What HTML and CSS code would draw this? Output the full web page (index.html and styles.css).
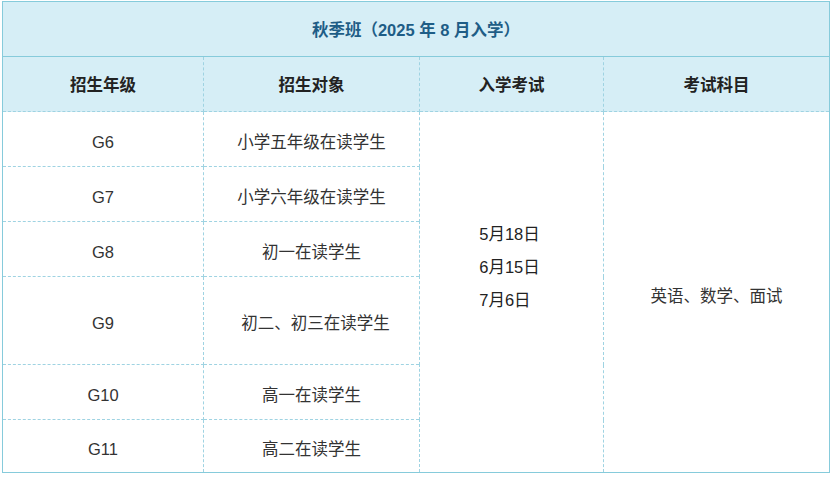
FILE: index.html
```html
<!DOCTYPE html>
<html lang="zh-CN">
<head>
<meta charset="utf-8">
<link rel="stylesheet" href="styles.css">
</head>
<body>
<div class="wrap">
<table class="plan">
  <colgroup>
    <col class="c1"><col class="c2"><col class="c3"><col class="c4">
  </colgroup>
  <thead>
    <tr class="title-row"><th colspan="4">秋季班（2025 年 8 月入学）</th></tr>
    <tr class="head-row"><th>招生年级</th><th>招生对象</th><th>入学考试</th><th>考试科目</th></tr>
  </thead>
  <tbody>
    <tr class="r"><td class="g">G6</td><td>小学五年级在读学生</td>
      <td rowspan="6" class="dates"><div class="date-list"><div>5月18日</div><div>6月15日</div><div>7月6日</div></div></td>
      <td rowspan="6" class="subj">英语、数学、面试</td></tr>
    <tr class="r"><td class="g">G7</td><td>小学六年级在读学生</td></tr>
    <tr class="r"><td class="g">G8</td><td>初一在读学生</td></tr>
    <tr class="r tall"><td class="g">G9</td><td class="shift">初二、初三在读学生</td></tr>
    <tr class="r"><td class="g">G10</td><td>高一在读学生</td></tr>
    <tr class="r last"><td class="g">G11</td><td>高二在读学生</td></tr>
  </tbody>
</table>
</div>
</body>
</html>
```
FILE: styles.css
```css
html, body {
  margin: 0;
  padding: 0;
  background: #ffffff;
}
.wrap {
  padding: 1px 0 0 2px;
}
.plan {
  border-collapse: collapse;
  width: 827px;
  table-layout: fixed;
  font-family: "Liberation Sans", "Noto Sans CJK SC", sans-serif;
  font-size: 16.5px;
  color: #333333;
  border: 1px solid #86cbdb;
}
.c1 { width: 201px; }
.c2 { width: 216px; }
.c3 { width: 184px; }
.c4 { width: 226px; }
th, td {
  text-align: center;
  vertical-align: middle;
  padding: 0;
  border: 1px dashed #9fd3e2;
}
.title-row,
.head-row,
.r {
  height: 55px;
}
.r.tall {
  height: 88px;
}
.r.last {
  height: 53px;
}
.title-row th {
  background: #d6eef6;
  color: #1e5d86;
  font-weight: bold;
  font-size: 16.5px;
  border-bottom: 1px solid #86cbdb;
}
.head-row th {
  background: #d6eef6;
  color: #222222;
  font-weight: bold;
}
.r td {
  padding-top: 3px;
}
.r td.g {
  padding-top: 6px;
}
.r td.shift {
  padding-left: 8px;
}
.r td.dates {
  padding: 0 0 50px 0;
}
.date-list {
  display: inline-flex;
  flex-direction: column;
  gap: 10px;
  text-align: left;
  color: #222222;
  margin-right: 4px;
}
.date-list div {
  line-height: 23px;
}
.r td.subj {
  padding-top: 5px;
}
```
